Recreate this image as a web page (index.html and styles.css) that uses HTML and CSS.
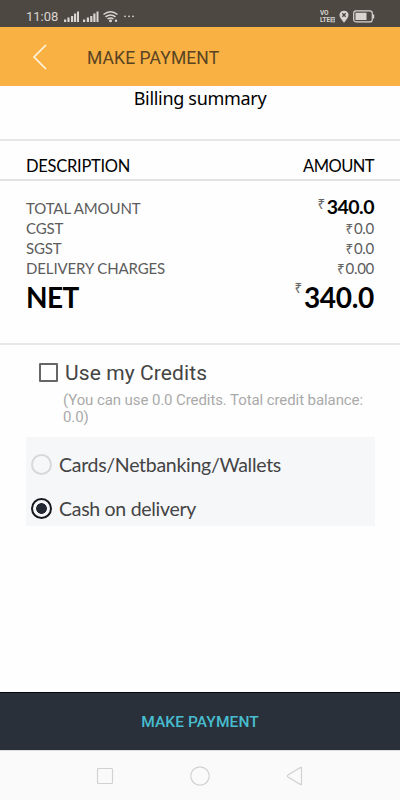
FILE: index.html
```html
<!DOCTYPE html>
<html lang="en">
<head>
<meta charset="utf-8">
<title>Make payment</title>
<link rel="stylesheet" href="styles.css">
</head>
<body>
<div class="status">
  <span class="time">11:08</span>
  <svg class="signals" width="74" height="16" viewBox="0 0 74 16">
    <g fill="#d8d5d0">
      <path d="M1 11.500h2.200V14H1zM4.400 9.500h2.200V14H4.400zM8 8h2.200v6H8zM11 5.500h2.200V14H11zM14 3.500h2V14h-2z"/>
      <path d="M20 11.500h2.200V14H20zM23.800 9.500H26V14h-2.200zM27.200 8h2.200v6h-2.200zM30.300 5.500h2.200V14h-2.200zM33.500 3.500h2V14h-2z"/>
      <circle cx="47.500" cy="12.700" r="1.500"/><circle cx="53" cy="12.700" r="1.200"/>
      <circle cx="62" cy="8.300" r=".9"/><circle cx="66" cy="8.300" r=".9"/><circle cx="70" cy="8.300" r=".9"/>
    </g>
    <path d="M40.500 6.500Q47.500 1 54.500 6.500M42.500 8.900Q47.500 5 52.500 8.900M44.500 11Q47.500 8.900 50.500 11" fill="none" stroke="#d8d5d0" stroke-width="1.500"/>
  </svg>
  <span class="volte"><span>VO</span><span>LTE⊟</span></span>
  <svg class="pin" width="10" height="14" viewBox="0 0 10 14"><path d="M5 .7C2.200.7.500 2.600.500 5c0 2.800 2.500 4.800 4.500 7.800C7 9.800 9.500 7.800 9.500 5 9.500 2.600 7.800.700 5 .700z" fill="#d8d5d0"/><path d="M3.300 3.300l3.400 3.400m0-3.400L3.300 6.700" stroke="#4e4843" stroke-width="1.300"/></svg>
  <svg class="battery" width="22" height="13" viewBox="0 0 22 13"><rect x=".7" y=".9" width="18.600" height="11" rx="2.500" fill="none" stroke="#d8d5d0" stroke-width="1.200"/><path d="M2.500 2.700h11v7.400h-11zM20 4.500h1.200v4H20z" fill="#d8d5d0"/></svg>
</div>
<header class="bar">
  <svg width="16" height="28" viewBox="0 0 16 28"><path d="M14 2L2 14l12 12" fill="none" stroke="#fff4df" stroke-width="1.700"/></svg>
  <h1>MAKE PAYMENT</h1>
</header>
<main>
  <h2>Billing summary</h2>
  <div class="heading"><span>DESCRIPTION</span><span class="right">AMOUNT</span></div>
  <div class="bill">
    <div class="row total"><span>TOTAL AMOUNT</span><span class="amount"><span class="cur">₹</span>340.0</span></div>
    <div class="row"><span>CGST</span><span class="amount"><span class="cur">₹</span>0.0</span></div>
    <div class="row"><span>SGST</span><span class="amount"><span class="cur">₹</span>0.0</span></div>
    <div class="row"><span>DELIVERY CHARGES</span><span class="amount"><span class="cur">₹</span>0.00</span></div>
    <div class="row net"><span>NET</span><span class="amount"><span class="cur">₹</span>340.0</span></div>
  </div>
  <div class="credits"><span class="box"></span><span>Use my Credits</span></div>
  <p class="note">(You can use 0.0 Credits. Total credit balance: 0.0)</p>
  <div class="methods">
    <div class="method"><span class="radio"></span><span>Cards/Netbanking/Wallets</span></div>
    <div class="method"><span class="radio on"></span><span>Cash on delivery</span></div>
  </div>
</main>
<div class="pay">MAKE PAYMENT</div>
<nav>
  <svg width="18" height="20" viewBox="0 0 18 20"><rect x="1.500" y="2.500" width="15" height="15" rx="1"/></svg>
  <svg width="20" height="20" viewBox="0 0 20 20"><circle cx="10" cy="10" r="9.200"/></svg>
  <svg width="18" height="20" viewBox="0 0 18 20"><path d="M15.500 1.700v16.600q0 .7-.8.300L2 11q-1.300-1 0-2L14.700 1.400q.8-.4.8.3z"/></svg>
</nav>
</body>
</html>
```
FILE: styles.css
```css
* { box-sizing: border-box; }
body { margin: 0; width: 400px; height: 800px; display: flex; flex-direction: column; background: #fefefe; color: #000; font-family: Lato, sans-serif; overflow: hidden; }
h1, h2, p { margin: 0; font-weight: 400; }
svg { display: block; flex: none; }
.status { height: 27px; flex: none; background: #4e4843; color: #d8d5d0; display: flex; align-items: center; padding: 6px 25px 0 26px; font-family: Roboto, sans-serif; }
.time { font-size: 13px; line-height: 16px; width: 37px; }
.signals { margin-top: -1px; }
.volte { margin-left: auto; display: flex; flex-direction: column; font-size: 6.500px; line-height: 7px; font-weight: 700; width: 15px; white-space: nowrap; letter-spacing: -.2px; }
.volte span { height: 7px; overflow: hidden; }
.pin { margin-left: 4px; }
.battery { margin-left: 4px; }
.bar { height: 59px; flex: none; background: #fab143; display: flex; align-items: center; padding: 1px 0 0 32px; }
h1 { font: 17.500px/24px Roboto, sans-serif; letter-spacing: .1px; color: #584423; margin: 1px 0 0 39px; }
main { flex: 1; }
h2 { height: 55px; border-bottom: 2px solid #e6e6e6; font: 18px/24px "Noto Sans", sans-serif; letter-spacing: -.31px; text-align: center; }
.heading { height: 40px; padding: 9px 26px 0 26px; display: flex; justify-content: space-between; border-bottom: 2px solid #e2e2e2; font-size: 16.500px; line-height: 32px; letter-spacing: -.27px; }
.heading .right { letter-spacing: -.55px; }
.bill { height: 164px; border-bottom: 2px solid #e8e8e8; padding: 14px 26px 0 26px; color: #5c5c5c; font-size: 15px; letter-spacing: -.12px; }
.row { display: flex; justify-content: space-between; height: 20px; line-height: 21px; }
.row.total { height: 23px; line-height: 26px; }
.cur { font: 13.500px/20px "Noto Sans", sans-serif; color: #666; margin-right: 1px; }
.amount { letter-spacing: -.3px; }
.total .amount { font-size: 19.500px; font-weight: 700; color: #000; line-height: 24px; letter-spacing: -.5px; }
.total .cur, .net .cur { vertical-align: top; line-height: 18px; margin-right: 2px; }
.row.net { height: 36px; line-height: 38px; font-size: 28px; font-weight: 700; color: #000; letter-spacing: -.6px; }
.net .cur { line-height: 21px; }
.credits { display: flex; align-items: center; height: 30px; margin: 13px 0 0 39px; font: 21px/30px Roboto, sans-serif; letter-spacing: .1px; color: #444; }
.box { width: 19px; height: 19px; border: 2px solid #666; border-radius: 1px; margin: -2px 7px 0 0; }
.note { margin: 4px 30px 0 63px; font: 15px/17px Roboto, sans-serif; letter-spacing: -.09px; color: #aaa; }
.methods { margin: 11px 25px 0 26px; height: 89px; background: #f6f7f9; padding-top: 5px; }
.method { height: 44px; display: flex; align-items: center; padding-left: 5px; font-size: 19.500px; letter-spacing: -.29px; color: #444; }
.radio { width: 21px; height: 21px; border: 2px solid #d8d8d8; border-radius: 50%; margin-right: 7px; }
.radio.on { border-color: #16181e; background: radial-gradient(circle, #242833 0 5px, transparent 5.700px); }
.pay { height: 58px; flex: none; background: #29303a; border-top: 1px solid #05090f; color: #47bdcf; display: flex; align-items: center; justify-content: center; font: 500 15.500px Roboto, sans-serif; letter-spacing: .1px; }
nav { height: 50px; flex: none; background: #fafafa; border-top: 1px solid #ddd; display: flex; justify-content: space-between; align-items: center; padding: 0 96px; }
nav svg { fill: none; stroke: #d2d2d2; stroke-width: 1.200; }
```
